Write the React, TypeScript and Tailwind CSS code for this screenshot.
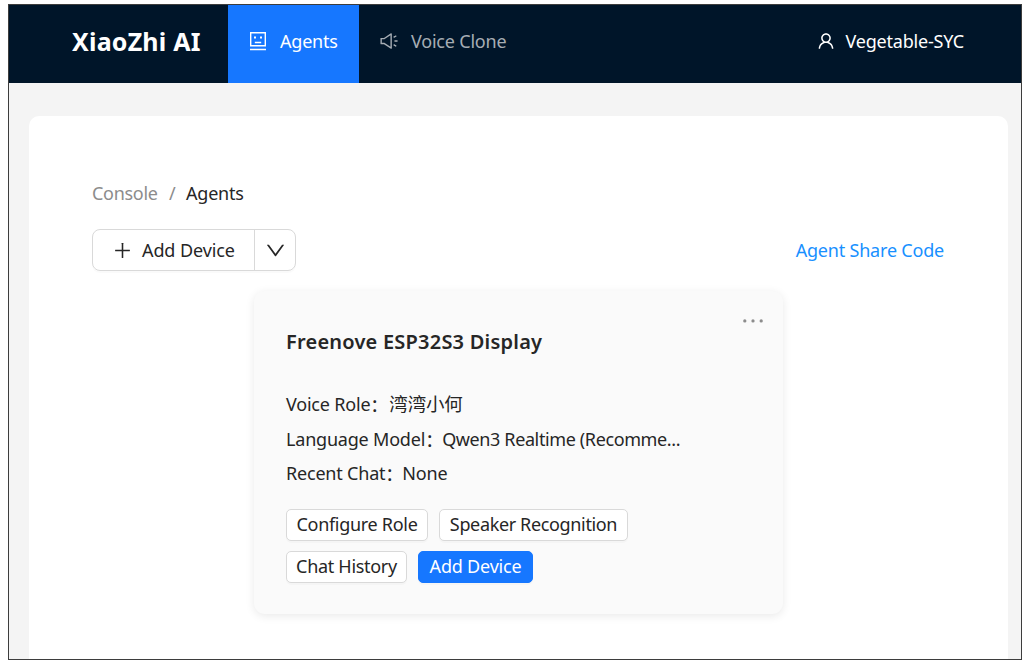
import React from "react";
import {
  AiOutlineDown,
  AiOutlineEllipsis,
  AiOutlinePlus,
  AiOutlineSound,
  AiOutlineUser,
} from "react-icons/ai";

function AgentIcon() {
  return (
    <svg width="18" height="20" viewBox="0 0 18 20" fill="none" stroke="currentColor" strokeWidth="1.4">
      <path d="M1.7 1.7h14.6v13.1H1.7zM1 18.5h16M5.8 11.5h6.4" />
      <path d="M5 6.5h2M11 6.5h2" strokeWidth="2" />
    </svg>
  );
}

function CardButton({ className, children }: { className: string; children: React.ReactNode }) {
  return (
    <button
      className={`flex h-8 items-center justify-center whitespace-nowrap rounded-[5px] border pb-px shadow-[0_2px_0_rgba(0,0,0,0.02)] ${className}`}
    >
      {children}
    </button>
  );
}

function Detail({ label, value, className = "" }: { label: string; value: string; className?: string }) {
  return (
    <div className="flex h-[34.5px] items-center whitespace-nowrap">
      <span>{label}</span>
      <span className="w-[18px] font-['Noto_Sans_CJK_SC',sans-serif]">：</span>
      <span className={className}>{value}</span>
    </div>
  );
}

export default function App() {
  return (
    <div className="h-[664px] w-[1030px] overflow-hidden bg-white pl-2 pt-1 font-['Noto_Sans','Noto_Sans_CJK_SC',sans-serif] text-[18px] leading-6 tracking-[-0.2px] text-[#262626]">
      <div className="flex h-[656px] w-[1014px] flex-col border border-[#3d3d3d] bg-[#f4f4f4]">
        <header className="flex h-[78px] shrink-0 items-stretch bg-[#001529] pb-[6px] text-white">
          <div className="flex w-[219px] items-center pl-[63px] text-[25px] font-bold tracking-[0.2px]">
            <span className="whitespace-nowrap">XiaoZhi AI</span>
          </div>
          <div className="-mb-[6px] flex w-[131px] items-center gap-[13px] bg-[#1677ff] pb-[6px] pl-[21px]">
            <AgentIcon />
            <span>Agents</span>
          </div>
          <div className="flex items-center gap-3 pl-5 text-[#a6adb4]">
            <AiOutlineSound size={20} />
            <span>Voice Clone</span>
          </div>
          <div className="ml-auto flex items-center gap-[9px] pr-[57px]">
            <AiOutlineUser size={20} />
            <span>Vegetable-SYC</span>
          </div>
        </header>
        <main className="ml-5 mr-[13px] mt-[33px] flex flex-1 flex-col rounded-t-[10px] bg-white pl-[63px] pr-16 pt-[65px]">
          <nav className="flex h-6 items-center">
            <span className="w-[77px] tracking-[-0.3px] text-[#8c8c8c]">Console</span>
            <span className="w-[17px] text-[#8c8c8c]">/</span>
            <span>Agents</span>
          </nav>
          <div className="mt-6 flex h-[42px] items-center justify-between">
            <div className="flex h-[42px] w-[204px] rounded-[8px] border border-[#d9d9d9] shadow-[0_2px_0_rgba(0,0,0,0.02)]">
              <button className="flex w-[162px] items-center gap-[9px] border-r border-[#d9d9d9] pl-[19px]">
                <AiOutlinePlus size={21} />
                <span className="tracking-[-0.1px]">Add Device</span>
              </button>
              <button className="flex flex-1 items-center justify-center">
                <AiOutlineDown size={23} />
              </button>
            </div>
            <a className="text-[#1890ff]">Agent Share Code</a>
          </div>
          <section className="ml-[162px] mt-5 flex h-[323px] w-[529px] flex-col rounded-[11px] bg-[#fafafa] px-8 shadow-[0_2px_10px_rgba(0,0,0,0.09)]">
            <div className="-mr-[17px] flex h-[39px] items-end justify-end text-[#8c8c8c]">
              <AiOutlineEllipsis size={30} className="translate-y-[6px]" />
            </div>
            <h2 className="flex h-6 items-center whitespace-nowrap text-[20px] font-semibold tracking-[0.22px]">
              Freenove ESP32S3 Display
            </h2>
            <div className="mt-[33px]">
              <Detail label="Voice Role" value="湾湾小何" className="pl-px text-[18.5px]" />
              <Detail label="Language Model" value="Qwen3 Realtime (Recomme..." className="-ml-px tracking-[-0.38px]" />
              <Detail label="Recent Chat" value="None" className="-ml-px" />
            </div>
            <div className="mt-[18px] flex gap-[11px]">
              <CardButton className="w-[142px] border-[#d9d9d9] bg-white tracking-[-0.3px]">Configure Role</CardButton>
              <CardButton className="w-[189px] border-[#d9d9d9] bg-white tracking-[-0.35px]">Speaker Recognition</CardButton>
            </div>
            <div className="mt-[10px] flex gap-[11px]">
              <CardButton className="w-[121px] border-[#d9d9d9] bg-white tracking-[-0.3px]">Chat History</CardButton>
              <CardButton className="w-[115px] border-[#1677ff] bg-[#1677ff] text-white">Add Device</CardButton>
            </div>
          </section>
        </main>
      </div>
    </div>
  );
}
